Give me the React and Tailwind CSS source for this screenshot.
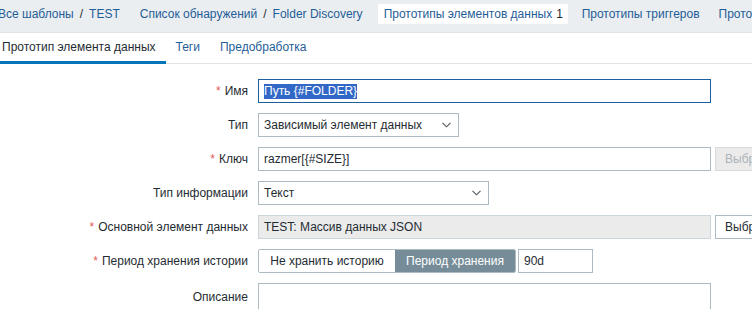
import React from "react";

function Chevron() {
  return (
    <svg width="9" height="6" viewBox="0 0 9 6" className="shrink-0">
      <polyline points="0.5,0.8 4.5,4.8 8.5,0.8" fill="none" stroke="#4f565c" strokeWidth="1.1" />
    </svg>
  );
}

function Row({ label, required, children }) {
  return (
    <div className="flex items-center h-[24px] mb-[10px]">
      <div className="w-[248px] shrink-0 text-right whitespace-nowrap">
        {required && <span className="text-[#e45959] mr-[4px]">*</span>}
        {label}
      </div>
      <div className="ml-[10px] flex items-center h-full">{children}</div>
    </div>
  );
}

export default function App() {
  return (
    <div className="w-[752px] h-[309px] overflow-hidden bg-white font-['Liberation_Sans',Arial,sans-serif] text-[12px] text-[#1f2c33]">
      {/* breadcrumbs / top tabs */}
      <div className="h-[33px] bg-[#ebeef0] border-b border-[#dfe4e7] flex items-start pt-[4px] whitespace-nowrap text-[#1f5d98]">
        <div className="h-[20px] flex items-center ml-[-2px]">
          <span>Все шаблоны</span>
          <span className="text-[#1f2c33] mx-[6px]">/</span>
          <span>TEST</span>
        </div>
        <div className="h-[20px] flex items-center ml-[20px]">
          <span>Список обнаружений</span>
          <span className="text-[#1f2c33] mx-[6px]">/</span>
          <span>Folder Discovery</span>
        </div>
        <div className="h-[20px] flex items-center ml-[15px] bg-white px-[6px] w-[190px]">
          Прототипы элементов данных <span className="ml-[4px] text-[#1f2c33]">1</span>
        </div>
        <div className="h-[20px] flex items-center ml-[14px]">Прототипы триггеров</div>
        <div className="h-[20px] flex items-center ml-[19px]">Прототипы графиков</div>
      </div>

      {/* form tabs */}
      <div className="h-[31px] flex items-start border-b border-[#dfe4e7] whitespace-nowrap">
        <div className="h-[31px] flex items-center ml-[-8px] pl-[10px] pr-[10px] border-b-[3px] border-[#0275b8] text-[#1f2c33]">
          Прототип элемента данных
        </div>
        <div className="h-[28px] flex items-center ml-[10px] text-[#1f5d98]">Теги</div>
        <div className="h-[28px] flex items-center ml-[20px] text-[#1f5d98]">Предобработка</div>
      </div>

      {/* form */}
      <div className="pt-[15px]">
        <Row label="Имя" required>
          <div className="w-[453px] h-[24px] border border-[#1b5f9e] flex items-center px-[5px]">
            <span className="bg-[#3168c8] text-white leading-[15px]">Путь {"{#FOLDER}"}</span>
          </div>
        </Row>
        <Row label="Тип">
          <div className="w-[201px] h-[24px] border border-[#acbbc2] flex items-center justify-between pl-[5px] pr-[7px]">
            <span>Зависимый элемент данных</span>
            <Chevron />
          </div>
        </Row>
        <Row label="Ключ" required>
          <div className="w-[453px] h-[24px] border border-[#acbbc2] flex items-center px-[5px]">
            razmer[{"{#SIZE}"}]
          </div>
          <div className="ml-[4px] h-[24px] border border-[#dadada] bg-[#ebebeb] text-[#acb4b9] flex items-center px-[9px] whitespace-nowrap">
            Выбрать
          </div>
        </Row>
        <Row label="Тип информации">
          <div className="w-[231px] h-[24px] border border-[#acbbc2] flex items-center justify-between pl-[5px] pr-[7px]">
            <span>Текст</span>
            <Chevron />
          </div>
        </Row>
        <Row label="Основной элемент данных" required>
          <div className="w-[453px] h-[24px] border border-[#ccd5d9] bg-[#ebebeb] flex items-center px-[5px]">
            TEST: Массив данных JSON
          </div>
          <div className="ml-[4px] h-[24px] border border-[#acbbc2] bg-white flex items-center px-[9px] whitespace-nowrap">
            Выбрать
          </div>
        </Row>
        <Row label="Период хранения истории" required>
          <div className="flex h-[24px] border border-[#acbbc2] rounded-[2px] overflow-hidden">
            <div className="w-[136px] flex items-center justify-center bg-white">Не хранить историю</div>
            <div className="w-[120px] flex items-center justify-center bg-[#768d99] text-white">Период хранения</div>
          </div>
          <div className="ml-[2px] w-[75px] h-[24px] border border-[#acbbc2] flex items-center px-[5px]">90d</div>
        </Row>
        <div className="flex items-start">
          <div className="w-[248px] shrink-0 text-right pt-[5px]">Описание</div>
          <div className="ml-[10px] w-[453px] h-[60px] border border-[#acbbc2]" />
        </div>
      </div>
    </div>
  );
}
